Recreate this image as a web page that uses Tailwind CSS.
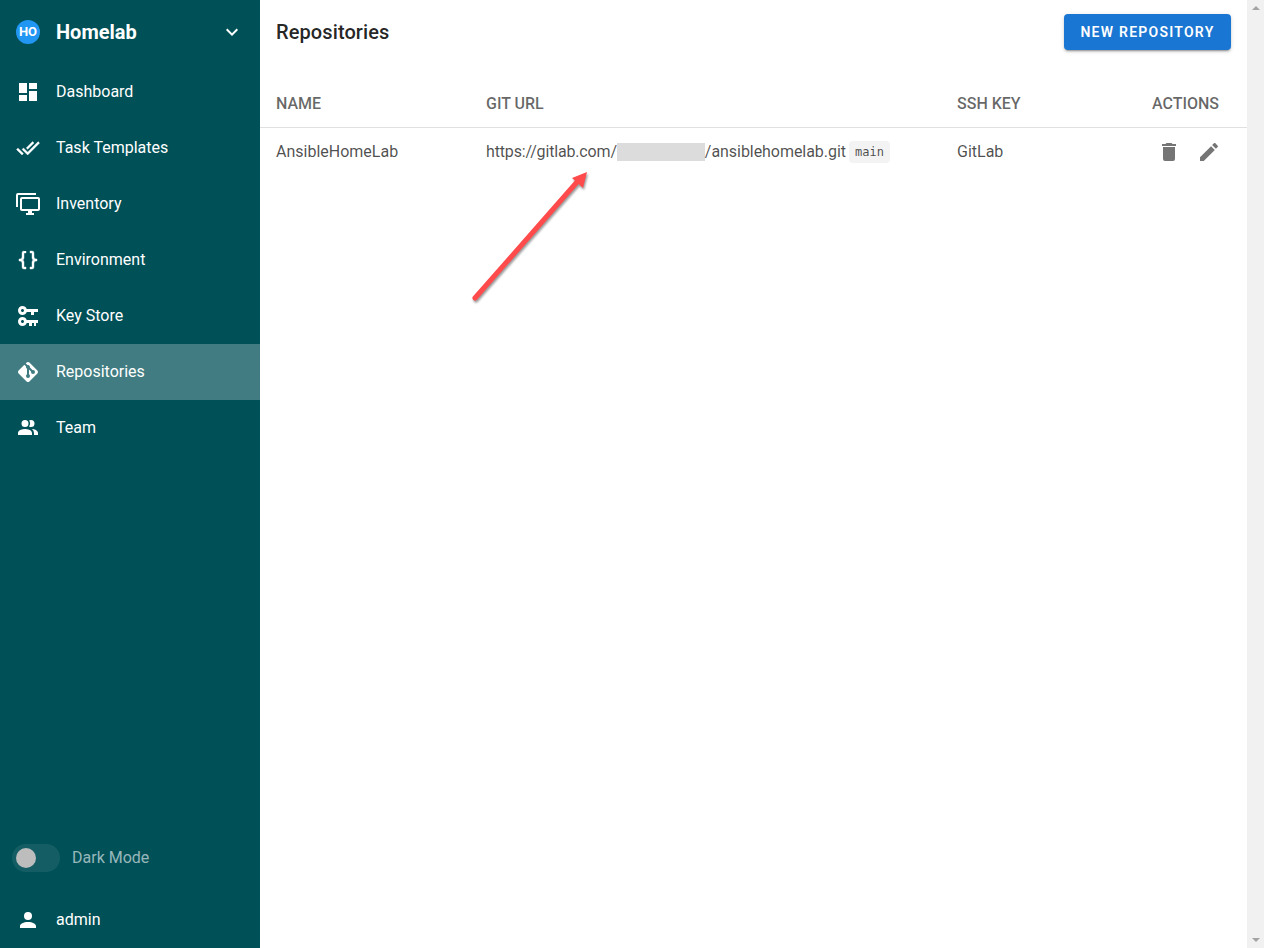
<!doctype html>
<html lang="en">
<head>
<meta charset="utf-8">
<title>Repositories</title>
<script src="https://cdn.jsdelivr.net/npm/@tailwindcss/browser@4"></script>
</head>
<body class="w-[1264px] h-[948px] overflow-hidden bg-white font-['Roboto',sans-serif]">
<div class="relative flex h-[948px] w-[1264px]">
  <aside class="flex h-full w-[260px] shrink-0 flex-col bg-[#005057] text-white">
    <div class="flex h-16 items-center px-4">
      <div class="flex h-6 w-6 items-center justify-center rounded-full bg-[#2196f3] text-[13px] font-bold">HO</div>
      <span class="ml-4 text-xl font-bold leading-none">Homelab</span>
      <svg class="ml-auto h-6 w-6" viewBox="0 0 24 24" fill="#fff"><path d="M7.41,8.58L12,13.17L16.59,8.58L18,10L12,16L6,10L7.41,8.58Z"/></svg>
    </div>
    <nav class="flex flex-col">
      <a class="flex h-14 items-center gap-4 pl-4 text-base"><svg class="h-6 w-6" viewBox="0 0 24 24" fill="#fff"><path d="M13,3V9H21V3M13,21H21V11H13M3,21H11V15H3M3,13H11V3H3V13Z"/></svg>Dashboard</a>
      <a class="flex h-14 items-center gap-4 pl-4 text-base"><svg class="h-6 w-6" viewBox="0 0 24 24" fill="#fff" stroke="#fff" stroke-width="0.4"><path d="M0.41,13.41L6,19L7.41,17.58L1.83,12M22.24,5.58L11.66,16.17L7.5,12L6.07,13.41L11.66,19L23.66,7M18,7L16.59,5.58L10.24,11.93L11.66,13.34L18,7Z"/></svg>Task Templates</a>
      <a class="flex h-14 items-center gap-4 pl-4 text-base"><svg class="h-6 w-6" viewBox="0 0 24 24" fill="#fff"><path d="M22,17V7H6V17H22M22,5A2,2 0 0,1 24,7V17C24,18.11 23.1,19 22,19H16V21H18V23H10V21H12V19H6C4.89,19 4,18.11 4,17V7A2,2 0 0,1 6,5H22M2,3V15H0V3A2,2 0 0,1 2,1H20V3H2Z"/></svg>Inventory</a>
      <a class="flex h-14 items-center gap-4 pl-4 text-base"><svg class="h-6 w-6" viewBox="0 0 24 24" fill="#fff" stroke="#fff" stroke-width="0.4"><path d="M8,3A2,2 0 0,0 6,5V9A2,2 0 0,1 4,11H3V13H4A2,2 0 0,1 6,15V19A2,2 0 0,0 8,21H10V19H8V14A2,2 0 0,0 6,12A2,2 0 0,0 8,10V5H10V3M16,3A2,2 0 0,1 18,5V9A2,2 0 0,0 20,11H21V13H20A2,2 0 0,0 18,15V19A2,2 0 0,1 16,21H14V19H16V14A2,2 0 0,1 18,12A2,2 0 0,1 16,10V5H14V3H16Z"/></svg>Environment</a>
      <a class="flex h-14 items-center gap-4 pl-4 text-base"><svg class="h-6 w-6" viewBox="0 0 24 24" fill="#fff"><path d="M6.5 2C8.46 2 10.13 3.25 10.74 5H22V8H18V11H15V8H10.74C10.13 9.75 8.46 11 6.5 11C4 11 2 9 2 6.5C2 4 4 2 6.5 2M6.5 5C5.67 5 5 5.67 5 6.5C5 7.33 5.67 8 6.5 8C7.33 8 8 7.33 8 6.5C8 5.67 7.33 5 6.5 5M6.5 13C8.46 13 10.13 14.25 10.74 16H22V19H20V22H18V19H16V22H13V19H10.74C10.13 20.75 8.46 22 6.5 22C4 22 2 20 2 17.5C2 15 4 13 6.5 13M6.5 16C5.67 16 5 16.67 5 17.5C5 18.33 5.67 19 6.5 19C7.33 19 8 18.33 8 17.5C8 16.67 7.33 16 6.5 16Z"/></svg>Key Store</a>
      <a class="flex h-14 items-center gap-4 bg-white/25 pl-4 text-base"><svg class="h-6 w-6" viewBox="0 0 24 24" fill="#fff"><path d="M2.6,10.59L8.38,4.8L10.07,6.5C9.83,7.35 10.22,8.28 11,8.73V14.27C10.4,14.61 10,15.26 10,16A2,2 0 0,0 12,18A2,2 0 0,0 14,16C14,15.26 13.6,14.61 13,14.27V9.41L15.07,11.5C15,11.65 15,11.82 15,12A2,2 0 0,0 17,14A2,2 0 0,0 19,12A2,2 0 0,0 17,10C16.82,10 16.65,10 16.5,10.07L13.93,7.5C14.19,6.57 13.71,5.55 12.78,5.16C12.35,5 11.9,4.96 11.5,5.07L9.8,3.38L10.59,2.6C11.37,1.81 12.63,1.81 13.41,2.6L21.4,10.59C22.19,11.37 22.19,12.63 21.4,13.41L13.41,21.4C12.63,22.19 11.37,22.19 10.59,21.4L2.6,13.41C1.81,12.63 1.81,11.37 2.6,10.59Z"/></svg>Repositories</a>
      <a class="flex h-14 items-center gap-4 pl-4 text-base"><svg class="h-6 w-6" viewBox="0 0 24 24" fill="#fff"><path d="M16 17V19H2V17S2 13 9 13 16 17 16 17M12.5 7.5A3.5 3.5 0 1 0 9 11A3.5 3.5 0 0 0 12.5 7.5M15.94 13A5.32 5.32 0 0 1 18 17V19H22V17S22 13.37 15.94 13M15 4A3.39 3.39 0 0 0 13.07 4.59A5 5 0 0 1 13.07 10.41A3.39 3.39 0 0 0 15 11A3.5 3.5 0 0 0 15 4Z"/></svg>Team</a>
    </nav>
    <div class="mt-auto flex h-7 items-center pl-3">
      <div class="flex h-7 w-12 items-center rounded-full bg-white/[0.08] pl-1"><div class="h-5 w-5 rounded-full bg-[#bdbdbd]"></div></div>
      <span class="ml-3 text-base text-white/60">Dark Mode</span>
    </div>
    <a class="mt-5 flex h-14 items-center gap-4 pl-4 text-base"><svg class="h-6 w-6" viewBox="0 0 24 24" fill="#fff"><path d="M12,4A4,4 0 0,1 16,8A4,4 0 0,1 12,12A4,4 0 0,1 8,8A4,4 0 0,1 12,4M12,14C16.42,14 20,15.79 20,18V20H4V18C4,15.79 7.58,14 12,14Z"/></svg>admin</a>
  </aside>

  <main class="w-[987px] shrink-0">
    <header class="flex h-16 items-center justify-between px-4">
      <h1 class="text-xl font-medium tracking-[0.1px] text-black/87">Repositories</h1>
      <button class="flex h-9 w-[167px] items-center justify-center rounded bg-[#1976d2] text-sm font-semibold tracking-[1.25px] text-white shadow-[0_3px_1px_-2px_rgba(0,0,0,0.2),0_2px_2px_0_rgba(0,0,0,0.14),0_1px_5px_0_rgba(0,0,0,0.12)]">NEW REPOSITORY</button>
    </header>
    <div class="mt-4 grid h-12 grid-cols-[210px_471px_1fr_auto] items-center border-b border-[#e0e0e0] pl-4 pr-7 text-base font-medium text-black/60">
      <div>NAME</div>
      <div>GIT URL</div>
      <div>SSH KEY</div>
      <div>ACTIONS</div>
    </div>
    <div class="grid h-12 grid-cols-[210px_471px_1fr_auto] items-center pl-4 pr-[26px] text-base text-black/70">
      <div>AnsibleHomeLab</div>
      <div class="flex items-center"><span class="tracking-[-0.16px]">https://gitlab.com/</span><span class="h-[18px] w-[88px] bg-[#dcdcdc]"></span><span class="tracking-[-0.05px]">/ansiblehomelab.git</span><code class="ml-[3px] flex h-[22px] w-[41px] items-center justify-center rounded bg-[#f3f3f3] font-['DejaVu_Sans_Mono',monospace] text-xs">main</code></div>
      <div>GitLab</div>
      <div class="flex gap-4">
        <svg class="h-6 w-6" viewBox="0 0 24 24" fill="#757575"><path d="M19,4H15.5L14.5,3H9.5L8.5,4H5V6H19M6,19A2,2 0 0,0 8,21H16A2,2 0 0,0 18,19V7H6V19Z"/></svg>
        <svg class="h-6 w-6" viewBox="0 0 24 24" fill="#757575"><path d="M20.71,7.04C21.1,6.65 21.1,6 20.71,5.63L18.37,3.29C18,2.9 17.35,2.9 16.96,3.29L15.12,5.12L18.87,8.87M3,17.25V21H6.75L17.81,9.93L14.06,6.18L3,17.25Z"/></svg>
      </div>
    </div>
  </main>

  <div class="flex h-full w-[17px] shrink-0 flex-col items-center justify-between bg-[#f1f1f1] py-[6px]">
    <div class="h-0 w-0 border-x-[4px] border-b-[4px] border-x-transparent border-b-[#a3a3a3]"></div>
    <div class="h-0 w-0 border-x-[4px] border-t-[4px] border-x-transparent border-t-[#a3a3a3]"></div>
  </div>

  <svg class="absolute left-[460px] top-[160px] h-[150px] w-[140px] drop-shadow-[1px_2px_1px_rgba(0,0,0,0.4)]" viewBox="460 160 140 150">
    <line x1="475" y1="298" x2="577" y2="182" stroke="#ff4b4b" stroke-width="5" stroke-linecap="round"/>
    <polygon points="587,172 583,188 572,178" fill="#ff4b4b"/>
  </svg>
</div>
</body>
</html>
